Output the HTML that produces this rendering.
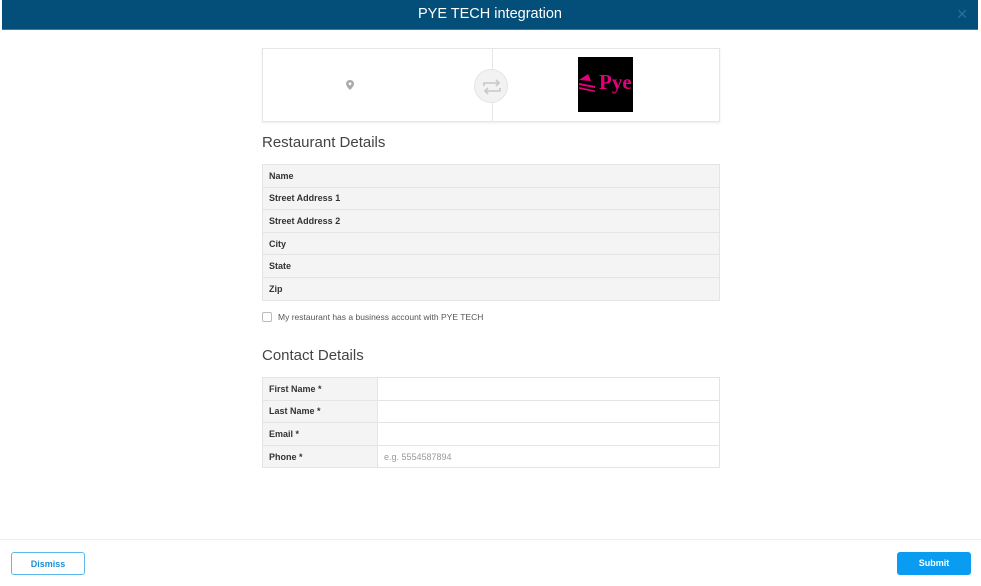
<!DOCTYPE html>
<html><head><style>
*{box-sizing:border-box;margin:0;padding:0}
body{width:981px;height:586px;background:#fff;font-family:"Liberation Sans",sans-serif;position:relative;overflow:hidden;color:#333}
.hdr{position:absolute;left:2px;top:0;width:976px;height:30px;background:#044e7a;border-bottom:1px solid #3a7aa3;color:#fff;font-size:14.5px;text-align:center;line-height:29px}
.x{position:absolute;right:10px;top:0;color:#2a6f9a;font-size:14px}
.card{position:absolute;left:262px;top:48px;width:458px;height:74px;border:1px solid #e6e6e6;box-shadow:0 1px 2px rgba(0,0,0,.08)}
.div{position:absolute;left:229px;top:0;width:1px;height:72px;background:#e6e6e6}
.swap{position:absolute;left:211px;top:20px;width:34px;height:34px;border-radius:50%;background:#f2f2f2;border:1px solid #e4e4e4}
.logo{position:absolute;left:315px;top:8px;width:55px;height:55px;background:#000;color:#e4007c;font-family:"Liberation Serif",serif;font-weight:bold;font-size:21px}
h2{position:absolute;left:262px;font-weight:normal;font-size:15px;color:#444}
table{position:absolute;left:262px;width:458px;border-collapse:collapse;font-size:9px}
td{height:22.6px;border:1px solid #e4e4e4;padding-left:6px;font-weight:bold;color:#333}
.r td{background:#f4f4f4}
.c td.l{background:#f4f4f4;width:115px}
.c td.v{background:#fff;font-weight:normal;color:#999}
.cb{position:absolute;left:262px;top:312px;width:10px;height:10px;border:1px solid #bbb;border-radius:2px}
.cbt{position:absolute;left:278px;top:312px;font-size:8.5px;color:#555}
.foot{position:absolute;left:0;top:539px;width:981px;height:1px;background:#ececec}
.btn{position:absolute;top:552px;width:74px;height:23px;border-radius:3px;font-size:9px;font-weight:bold;text-align:center;line-height:22px}
</style></head><body>
<div class="hdr">PYE TECH integration<span class="x">✕</span></div>
<div class="card">
 <svg style="position:absolute;left:83px;top:31px" width="8" height="10" viewBox="0 0 8 10"><path d="M4 0C1.8 0 0 1.7 0 3.8 0 6.5 4 10 4 10s4-3.5 4-6.2C8 1.7 6.2 0 4 0z" fill="#aaa"/><circle cx="4" cy="3.8" r="1.4" fill="#fff"/></svg>
 <div class="div"></div>
 <div class="swap"><svg width="34" height="34" viewBox="0 0 34 34" fill="none" stroke="#c8c8c8" stroke-width="1.6"><path d="M9 16v-3h15M21 10l3 3-3 3M25 18v3H10M13 24l-3-3 3-3"/></svg></div>
 <div class="logo"><svg style="position:absolute;left:1px;top:16px" width="18" height="20" viewBox="0 0 18 20" fill="#e4007c"><path d="M0 7l9-6 3 7z"/><path d="M0 10l16 3v2L0 12zM0 14l16 3.5V19L0 16z"/></svg><span style="position:absolute;left:21px;top:13px">Pye</span></div>
</div>
<h2 style="top:134px">Restaurant Details</h2>
<table class="r" style="top:164px">
<tr><td>Name</td></tr><tr><td>Street Address 1</td></tr><tr><td>Street Address 2</td></tr><tr><td>City</td></tr><tr><td>State</td></tr><tr><td>Zip</td></tr>
</table>
<div class="cb"></div><div class="cbt">My restaurant has a business account with PYE TECH</div>
<h2 style="top:347px">Contact Details</h2>
<table class="c" style="top:377px">
<tr><td class="l">First Name *</td><td class="v"></td></tr>
<tr><td class="l">Last Name *</td><td class="v"></td></tr>
<tr><td class="l">Email *</td><td class="v"></td></tr>
<tr><td class="l">Phone *</td><td class="v">e.g. 5554587894</td></tr>
</table>
<div class="foot"></div>
<div class="btn" style="left:11px;border:1px solid #5bb8ee;color:#1a8fd6;background:#fff">Dismiss</div>
<div class="btn" style="left:897px;background:#0a9cf0;color:#fff">Submit</div>
</body></html>
